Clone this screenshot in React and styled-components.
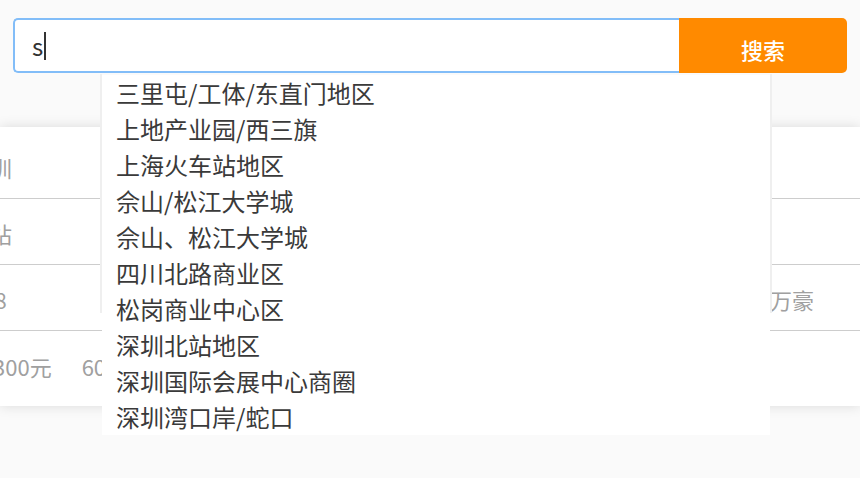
import React from 'react';
import styled, { createGlobalStyle } from 'styled-components';

const GlobalStyle = createGlobalStyle`
  body {
    margin: 0;
    background: #fafafa;
    font-family: "Noto Sans CJK SC", "Noto Sans", sans-serif;
    overflow: hidden;
  }
`;

const Page = styled.div`
  width: 860px;
  height: 478px;
  overflow: hidden;
`;

const SearchBar = styled.div`
  position: relative;
  display: flex;
  padding: 18px 13px 0;
  z-index: 2;
`;

const InputBox = styled.div`
  flex: 1;
  height: 55px;
  box-sizing: border-box;
  display: flex;
  align-items: center;
  padding-left: 17px;
  background: #fff;
  border: 2px solid #82bdf8;
  border-right: none;
  border-radius: 5px 0 0 5px;
  font-size: 24px;
  color: #333;
`;

const Caret = styled.span`
  display: inline-block;
  width: 2px;
  height: 28px;
  margin-left: 1px;
  background: #333;
`;

const SearchButton = styled.button`
  width: 168px;
  height: 55px;
  border: none;
  border-radius: 0 5px 5px 0;
  background: #ff8a00;
  color: #fff;
  font-family: inherit;
  font-size: 22px;
  font-weight: 500;
  padding-top: 8px;
  cursor: pointer;
`;

const Suggestions = styled.ul`
  position: absolute;
  top: 74px;
  left: 100px;
  width: 672px;
  height: 239px;
  box-sizing: border-box;
  margin: 0;
  padding: 1px 0 0;
  list-style: none;
  border-left: 2px solid #efefef;
  border-right: 2px solid #efefef;
`;

const SuggestionItem = styled.li`
  height: 36px;
  line-height: 36px;
  padding-left: 14px;
  background: #fff;
  font-size: 24px;
  color: #3a3a3a;
  white-space: nowrap;
`;

const Card = styled.div`
  margin-top: 54px;
  padding: 6px 0 9px;
  background: #fff;
  box-shadow: 0 0 12px rgba(0, 0, 0, 0.13);
  overflow: hidden;
`;

const FilterRow = styled.div`
  display: flex;
  align-items: center;
  height: 66px;
  padding-top: 3px;
  box-sizing: border-box;
  border-bottom: ${p => (p.last ? 'none' : '1px solid #cdcdcd')};
  font-size: 22px;
  color: #a0a0a0;
  white-space: nowrap;
`;

const Track = styled.div`
  display: flex;
  gap: 30px;
  margin-left: ${p => -p.offset}px;
`;

const RightGroup = styled.div`
  display: flex;
  gap: 30px;
  margin-left: auto;
  padding-right: 46px;
`;

const suggestions = [
  '三里屯/工体/东直门地区',
  '上地产业园/西三旗',
  '上海火车站地区',
  '佘山/松江大学城',
  '佘山、松江大学城',
  '四川北路商业区',
  '松岗商业中心区',
  '深圳北站地区',
  '深圳国际会展中心商圈',
  '深圳湾口岸/蛇口',
];

const rows = [
  { offset: 32, items: ['深圳'] },
  { offset: 54, items: ['火车站'] },
  { offset: 74, items: ['莫泰168'], right: ['万豪'] },
  { offset: 7, items: ['300元', '600元'] },
];

export default function App() {
  return (
    <Page>
      <GlobalStyle />
      <SearchBar>
        <InputBox>
          s<Caret />
        </InputBox>
        <SearchButton>搜索</SearchButton>
        <Suggestions>
          {suggestions.map(s => (
            <SuggestionItem key={s}>{s}</SuggestionItem>
          ))}
        </Suggestions>
      </SearchBar>
      <Card>
        {rows.map((row, i) => (
          <FilterRow key={i} last={i === rows.length - 1}>
            <Track offset={row.offset}>
              {row.items.map(t => (
                <span key={t}>{t}</span>
              ))}
            </Track>
            {row.right && (
              <RightGroup>
                {row.right.map(t => (
                  <span key={t}>{t}</span>
                ))}
              </RightGroup>
            )}
          </FilterRow>
        ))}
      </Card>
    </Page>
  );
}
